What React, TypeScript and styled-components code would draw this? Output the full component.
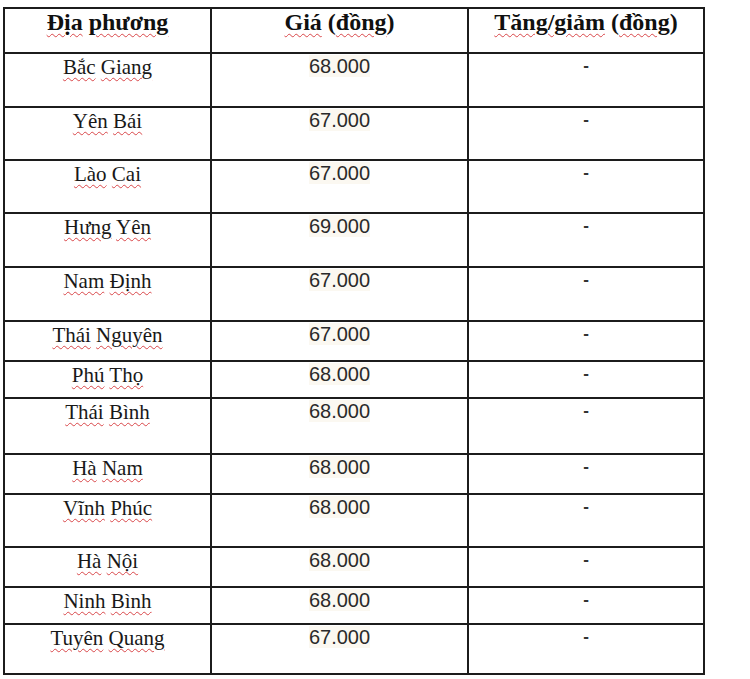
import styled, { createGlobalStyle } from 'styled-components';

const GlobalStyle = createGlobalStyle`
  html, body {
    margin: 0;
    padding: 0;
    background: #fff;
  }
`;

const Page = styled.div`
  padding: 7px 0 0 3px;
`;

const Table = styled.table`
  border-collapse: collapse;
  table-layout: fixed;
  width: 700px;
  color: #141414;
`;

const Cell = styled.td<{ $h: number }>`
  height: ${(p) => p.$h}px;
  padding: 0;
  border: 2px solid #1c1c1c;
  vertical-align: top;
  text-align: center;
  box-sizing: border-box;
`;

const HeadCell = styled.th<{ $w: number }>`
  width: ${(p) => p.$w}px;
  height: 45px;
  box-sizing: border-box;
  padding: 0;
  border: 2px solid #1c1c1c;
  vertical-align: top;
  text-align: center;
  font-family: 'Liberation Serif', 'Times New Roman', serif;
  font-weight: bold;
  font-size: 24px;
  line-height: 26px;
  color: #101010;
`;

const Name = styled.div`
  padding-top: 1px;
  font-family: 'Liberation Serif', 'Times New Roman', serif;
  font-size: 21px;
  line-height: 24px;
  color: #181818;
`;

const Price = styled.div`
  padding-top: 1px;
  font-family: 'Liberation Sans', Arial, sans-serif;
  font-size: 20px;
  line-height: 23px;
  color: #2a2a2a;

  span {
    background: #fbf8f1;
  }
`;

const Change = styled.div`
  padding-top: 1px;
  font-family: 'Liberation Sans', Arial, sans-serif;
  font-size: 17px;
  line-height: 22px;
  font-weight: bold;
  color: #333;
`;

const Word = styled.span`
  text-decoration: underline wavy #d9474a;
  text-decoration-thickness: 1px;
  text-underline-offset: 3px;
`;

interface IRow {
  name: string;
  price: string;
  height: number;
}

const rows: IRow[] = [
  { name: 'Bắc Giang', price: '68.000', height: 54 },
  { name: 'Yên Bái', price: '67.000', height: 53 },
  { name: 'Lào Cai', price: '67.000', height: 53 },
  { name: 'Hưng Yên', price: '69.000', height: 54 },
  { name: 'Nam Định', price: '67.000', height: 54 },
  { name: 'Thái Nguyên', price: '67.000', height: 40 },
  { name: 'Phú Thọ', price: '68.000', height: 37 },
  { name: 'Thái Bình', price: '68.000', height: 56 },
  { name: 'Hà Nam', price: '68.000', height: 40 },
  { name: 'Vĩnh Phúc', price: '68.000', height: 53 },
  { name: 'Hà Nội', price: '68.000', height: 40 },
  { name: 'Ninh Bình', price: '68.000', height: 37 },
  { name: 'Tuyên Quang', price: '67.000', height: 50 },
];

// every word gets its own red squiggle, like a spell-checker
const Squiggle = ({ text }: { text: string }) => (
  <>
    {text.split(' ').map((w, i) => (
      <span key={i}>
        {i > 0 && ' '}
        <Word>{w}</Word>
      </span>
    ))}
  </>
);

const App = (): JSX.Element => {
  return (
    <Page>
      <GlobalStyle />
      <Table>
        <thead>
          <tr>
            <HeadCell $w={207}>
              <Squiggle text='Địa phương' />
            </HeadCell>
            <HeadCell $w={257}>
              <Word>Giá</Word> (<Word>đồng</Word>)
            </HeadCell>
            <HeadCell $w={236}>
              <Word>Tăng/giảm</Word> (<Word>đồng</Word>)
            </HeadCell>
          </tr>
        </thead>
        <tbody>
          {rows.map((r) => (
            <tr key={r.name}>
              <Cell $h={r.height}>
                <Name>
                  <Squiggle text={r.name} />
                </Name>
              </Cell>
              <Cell $h={r.height}>
                <Price>
                  <span>{r.price}</span>
                </Price>
              </Cell>
              <Cell $h={r.height}>
                <Change>-</Change>
              </Cell>
            </tr>
          ))}
        </tbody>
      </Table>
    </Page>
  );
};

export default App;
